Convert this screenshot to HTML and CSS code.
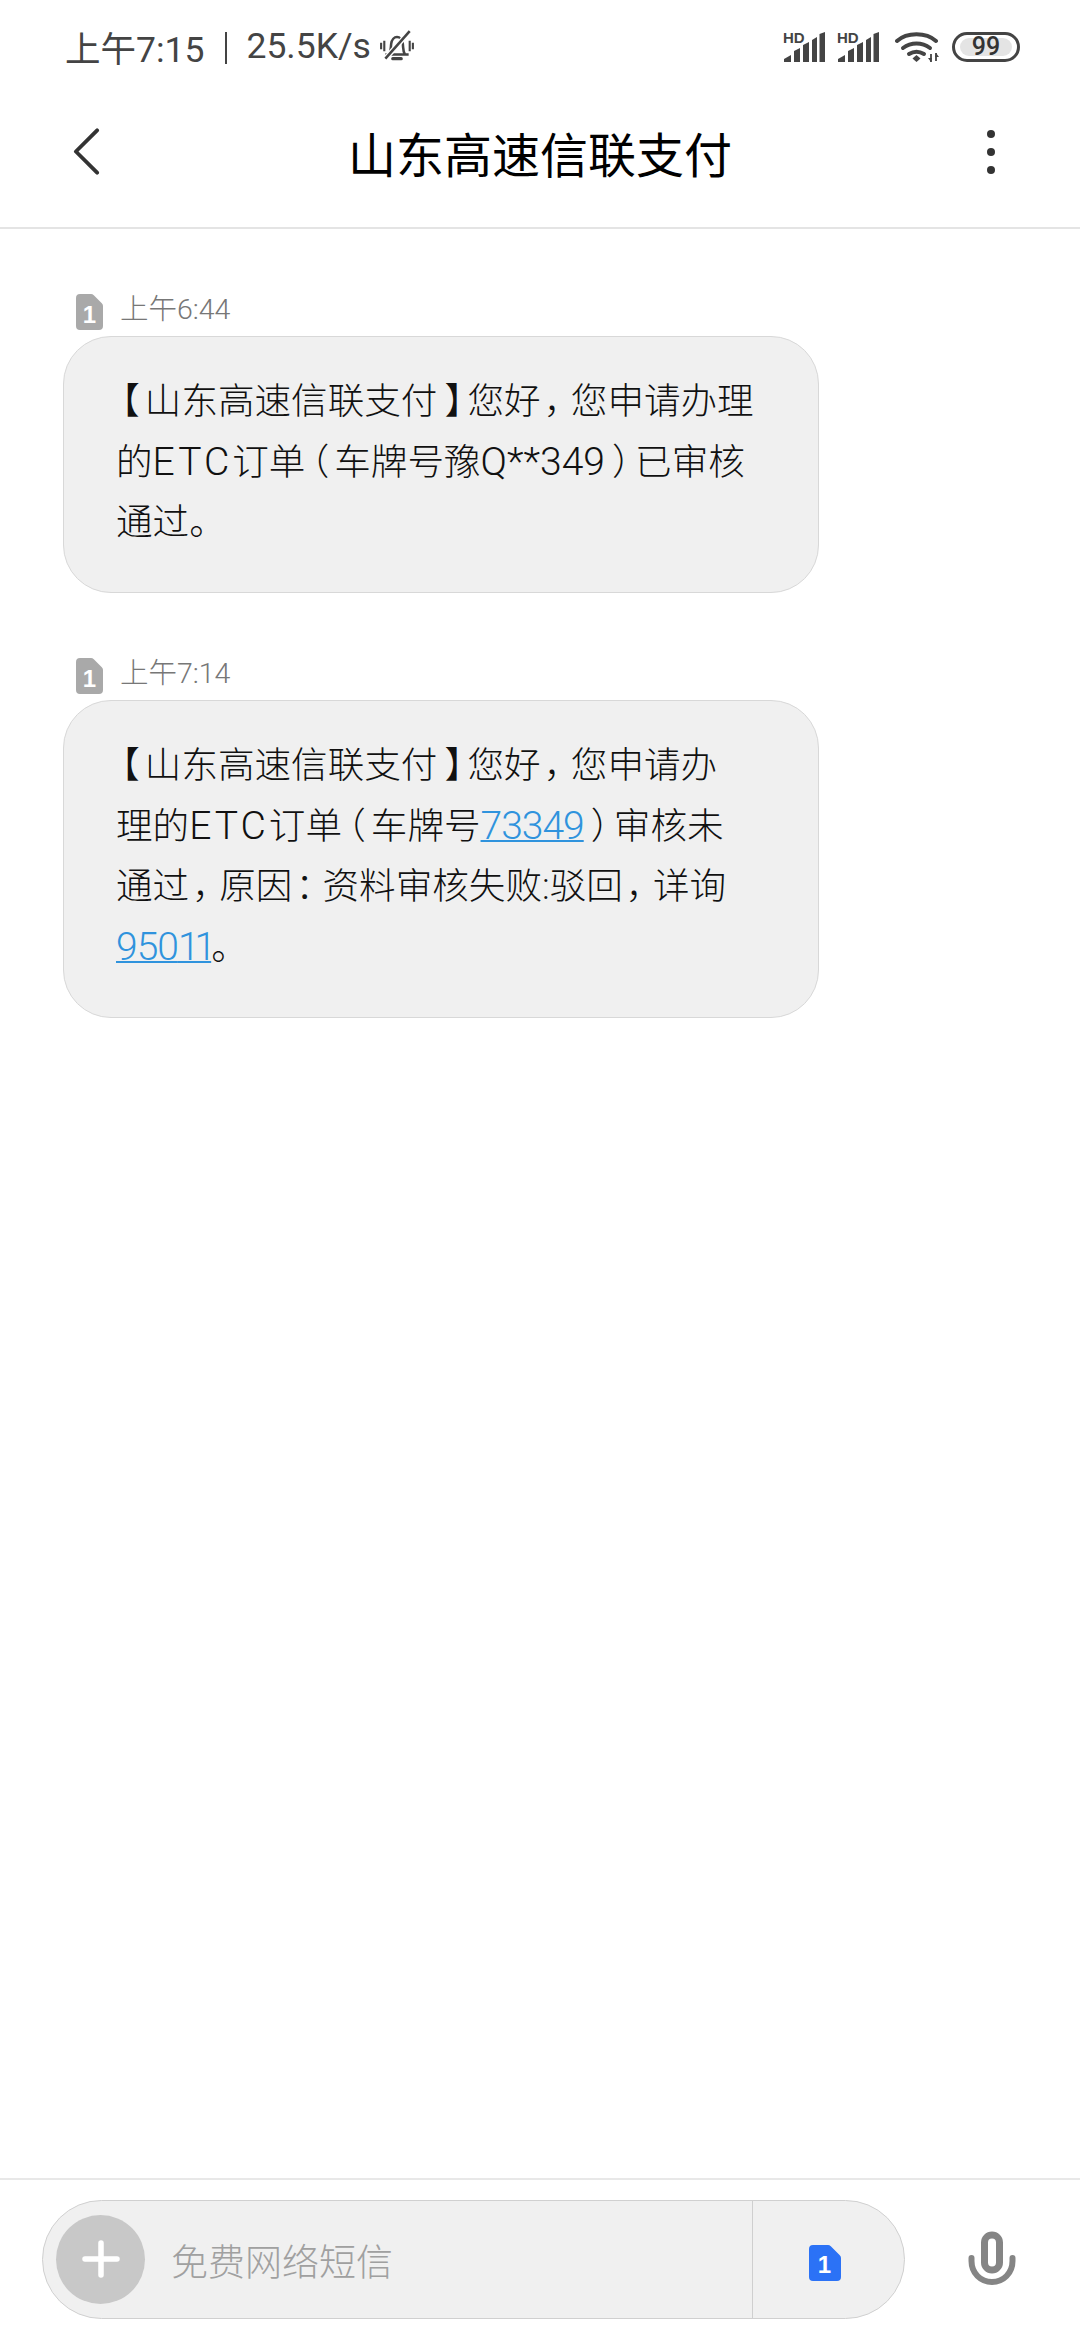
FILE: index.html
```html
<!DOCTYPE html>
<html lang="zh-CN">
<head>
  <meta charset="UTF-8" />
  <meta name="viewport" content="width=device-width, initial-scale=1" />
  <title>山东高速信联支付</title>
  <link rel="stylesheet" href="styles.css">
</head>
<body>
  <div class="app">
    <div class="status-bar">
      <div class="status-left">
        <span>上午7:15</span>
        <span class="status-sep"></span>
        <span>25.5K/s</span>
        <svg class="bell" viewBox="0 0 34 34" fill="none" stroke="#444" stroke-width="2.400">
          <path d="M6 25h22M9.500 25c2-3 1.500-6 2-10 .5-4 3-6.500 5.500-6.500s5 2.500 5.500 6.500c.5 4 0 7 2 10"/>
          <path d="M13 29h8" stroke-width="3" stroke-linecap="round"/>
          <path d="M2 14v6M5 12v10M29 12v10M32 14v6" stroke-width="2"/>
          <path d="M6 29L29 3" stroke="#fff" stroke-width="5"/>
          <path d="M6 29L29 3"/>
        </svg>
      </div>
      <div class="status-right">
        <div class="signal">
          <span class="hd">HD</span>
          <svg viewBox="0 0 41 30" fill="#444"><path d="M0 30v-3l7-4v7zM10 30V19l6-3v14zM19 30V13l6-3v20zM28 30V8l5-3v25zM35.500 30V2l5.500-2v30z"/></svg>
        </div>
        <div class="signal">
          <span class="hd">HD</span>
          <svg viewBox="0 0 41 30" fill="#444"><path d="M0 30v-3l7-4v7zM10 30V19l6-3v14zM19 30V13l6-3v20zM28 30V8l5-3v25zM35.500 30V2l5.500-2v30z"/></svg>
        </div>
        <svg class="wifi" viewBox="0 0 44 32" fill="none" stroke="#444" stroke-width="4" stroke-linecap="round">
          <path d="M2 10C12 1 31 1 41 10"/>
          <path d="M8 17c8-6 19-6 27 0"/>
          <path d="M14 23c5-3 10-3 15 0" />
          <path d="M21.500 24l4 3.500-4 3.500-4-3.500z" fill="#444" stroke="none"/>
          <path d="M36 23v8M41 22v8" stroke-width="1.800" stroke-linecap="butt"/>
          <path d="M33 27l3 4 1-4zM40 26l1-4 3 4z" fill="#444" stroke="none"/>
        </svg>
        <div class="battery"><span class="battery-fill">99</span></div>
      </div>
    </div>

    <header class="title-bar">
      <svg class="back" viewBox="0 0 28 48" fill="none" stroke="#333" stroke-width="4" stroke-linecap="round" stroke-linejoin="round">
        <path d="M25 2L3 24l22 22"/>
      </svg>
      <h1>山东高速信联支付</h1>
      <div class="menu"><i></i><i></i><i></i></div>
    </header>

    <main class="thread">
      <section class="msg">
        <div class="meta">
          <svg class="sim" viewBox="0 0 27 36"><path d="M4 0h11c1 0 2 .4 2.800 1.200l8 8c.8.8 1.200 1.800 1.200 2.800v20a4 4 0 0 1-4 4H4a4 4 0 0 1-4-4V4a4 4 0 0 1 4-4z" fill="#a9a9a9"/><text x="13.500" y="29" class="sim-num">1</text></svg>
          <span>上午6:44</span>
        </div>
        <div class="bubble"><span class="lb">【</span>山东高速信联支付<span class="rb">】</span>您好<span class="cm">，</span>您申请办理<br>的<span class="etc">ETC</span>订单<span class="lb">（</span>车牌号豫<span class="latin plate">Q**349</span><span class="rb">）</span>已审核<br>通过。</div>
      </section>
      <section class="msg">
        <div class="meta">
          <svg class="sim" viewBox="0 0 27 36"><path d="M4 0h11c1 0 2 .4 2.800 1.200l8 8c.8.8 1.200 1.800 1.200 2.800v20a4 4 0 0 1-4 4H4a4 4 0 0 1-4-4V4a4 4 0 0 1 4-4z" fill="#a9a9a9"/><text x="13.500" y="29" class="sim-num">1</text></svg>
          <span>上午7:14</span>
        </div>
        <div class="bubble"><span class="lb">【</span>山东高速信联支付<span class="rb">】</span>您好<span class="cm">，</span>您申请办<br>理的<span class="etc">ETC</span>订单<span class="lb">（</span>车牌号<a class="latin" href="#">73349</a><span class="rb">）</span>审核未<br>通过<span class="cm">，</span>原因<span class="cm">：</span>资料审核失败:驳回<span class="cm">，</span>详询<br><a class="latin" href="#">950<span class="ones">11</span></a>。</div>
      </section>
    </main>

    <footer class="composer">
      <div class="input-box">
        <div class="add">
          <svg viewBox="0 0 38 38" fill="none" stroke="#fff" stroke-width="5.500" stroke-linecap="round"><path d="M19 3v32M3 19h32"/></svg>
        </div>
        <span class="placeholder">免费网络短信</span>
        <div class="sim-switch">
          <svg class="sim-blue" viewBox="0 0 32 36"><path d="M4 0h15c1 0 2 .4 2.800 1.200l9 9c.8.8 1.200 1.800 1.200 2.800v19a4 4 0 0 1-4 4H4a4 4 0 0 1-4-4V4a4 4 0 0 1 4-4z" fill="#2b72f6"/><text x="15.500" y="28" class="sim-num">1</text></svg>
        </div>
      </div>
      <svg class="mic" viewBox="0 0 48 56" fill="none" stroke="#858585">
        <rect x="16.500" y="4" width="15" height="35" rx="7.500" stroke-width="7"/>
        <path d="M3.500 27v3c0 12 9 21 20.500 21s20.500-9 20.500-21v-3" stroke-width="6" stroke-linecap="round"/>
      </svg>
    </footer>
  </div>
</body>
</html>
```

FILE: styles.css
```css
body {
  margin: 0;
  background: #fff;
  font-family: Roboto, "Noto Sans CJK SC", sans-serif;
  color: #222;
}
.app {
  display: flex;
  flex-direction: column;
  height: 2340px;
}

/* status bar */
.status-bar {
  display: flex;
  justify-content: space-between;
  align-items: center;
  height: 94px;
  padding: 0 60px 0 65px;
  box-sizing: border-box;
}
.status-left {
  display: flex;
  align-items: center;
  padding-bottom: 2px;
  font-size: 35.500px;
  color: #444;
}
.status-sep {
  width: 2px;
  height: 32px;
  margin: 3px 19px 0 21px;
  background: #444;
}
.bell {
  width: 36px;
  height: 36px;
  margin-left: 8px;
}
.status-right {
  display: flex;
  align-items: center;
  gap: 13px;
}
.signal {
  position: relative;
  width: 41px;
  height: 30px;
}
.signal svg {
  display: block;
  width: 41px;
  height: 30px;
}
.hd {
  position: absolute;
  left: -1px;
  top: -2px;
  font-size: 15px;
  line-height: 15px;
  font-weight: 700;
  color: #444;
  font-family: "Liberation Sans", sans-serif;
}
.wifi {
  width: 44px;
  height: 32px;
  margin-left: 3px;
}
.battery {
  display: flex;
  box-sizing: border-box;
  width: 68px;
  height: 30px;
  padding: 3px 5px;
  border: 3px solid #444;
  border-radius: 15px;
}
.battery-fill {
  flex: 1;
  background: #e4e4e4;
  border-radius: 9px;
  text-align: center;
  font-size: 25px;
  font-weight: 500;
  line-height: 18px;
  color: #333;
}

/* title */
.title-bar {
  display: grid;
  grid-template-columns: 1fr auto 1fr;
  align-items: center;
  height: 135px;
  padding: 0 85px 18px;
  border-bottom: 2px solid #e4e4e4;
  box-sizing: border-box;
}
.title-bar h1 {
  margin: 0;
  font-size: 48px;
  font-weight: 400;
  color: #000;
}
.back {
  width: 27px;
  height: 47px;
  margin-left: -12px;
}
.menu {
  display: flex;
  flex-direction: column;
  align-items: flex-end;
  gap: 10px;
}
.menu i {
  width: 8px;
  height: 8px;
  border-radius: 50%;
  background: #333;
}

/* messages */
.thread {
  flex: 1;
  padding: 65px 0 0 63px;
}
.msg {
  margin-bottom: 65px;
}
.meta {
  display: flex;
  align-items: center;
  gap: 17px;
  height: 36px;
  margin: 0 0 6px 13px;
  font-size: 28.500px;
  font-weight: 300;
  color: #777;
}
.meta span {
  margin-top: -11px;
}
.sim {
  width: 27px;
  height: 36px;
}
.sim-num {
  font-family: "Liberation Sans", sans-serif;
  font-size: 24px;
  font-weight: 700;
  text-anchor: middle;
  fill: #fff;
}
.bubble {
  box-sizing: border-box;
  width: 756px;
  padding: 35px 40px 38.500px 52px;
  background: #f0f0f0;
  border: 1px solid #d8d8d8;
  border-radius: 48px;
  font-size: 36.600px;
  line-height: 60.500px;
  font-weight: 300;
  color: #111;
  white-space: nowrap;
}
.bubble a {
  color: #2f93dd;
  text-decoration-thickness: 2px;
}

/* the phone's font has narrower punctuation and larger latin than Noto */
.lb {
  margin: 0 5px 0 5.500px;
  font-feature-settings: "halt";
}
.rb {
  margin-left: 7px;
  letter-spacing: -13.500px;
}
.cm {
  margin-left: 3px;
  letter-spacing: -9.500px;
}
.latin,
.etc {
  font-size: 39px;
  line-height: 1;
  letter-spacing: -1px;
}
.plate {
  letter-spacing: 0;
}
.etc {
  letter-spacing: 3px;
}
.ones {
  letter-spacing: -5px;
}

/* bottom input */
.composer {
  display: flex;
  align-items: center;
  height: 162px;
  padding: 0 0 2px 42px;
  border-top: 2px solid #e8e8e8;
  box-sizing: border-box;
}
.input-box {
  display: flex;
  align-items: center;
  box-sizing: border-box;
  width: 863px;
  height: 119px;
  background: #f0f0f0;
  border: 1px solid #d0d0d0;
  border-radius: 60px;
}
.add {
  display: flex;
  align-items: center;
  justify-content: center;
  width: 89px;
  height: 89px;
  margin-left: 13px;
  border-radius: 50%;
  background: #c8c8c8;
}
.add svg {
  width: 38px;
  height: 38px;
}
.placeholder {
  flex: 1;
  margin: 2px 0 0 26px;
  font-size: 37px;
  font-weight: 300;
  color: #a0a0a0;
}
.sim-switch {
  display: flex;
  align-items: center;
  align-self: stretch;
  width: 152px;
  padding-left: 56px;
  box-sizing: border-box;
  border-left: 1px solid #cfcfcf;
}
.sim-blue {
  width: 32px;
  height: 36px;
  margin-top: 8px;
}
.mic {
  width: 48px;
  height: 56px;
  margin: 0 0 0 63px;
}
```
